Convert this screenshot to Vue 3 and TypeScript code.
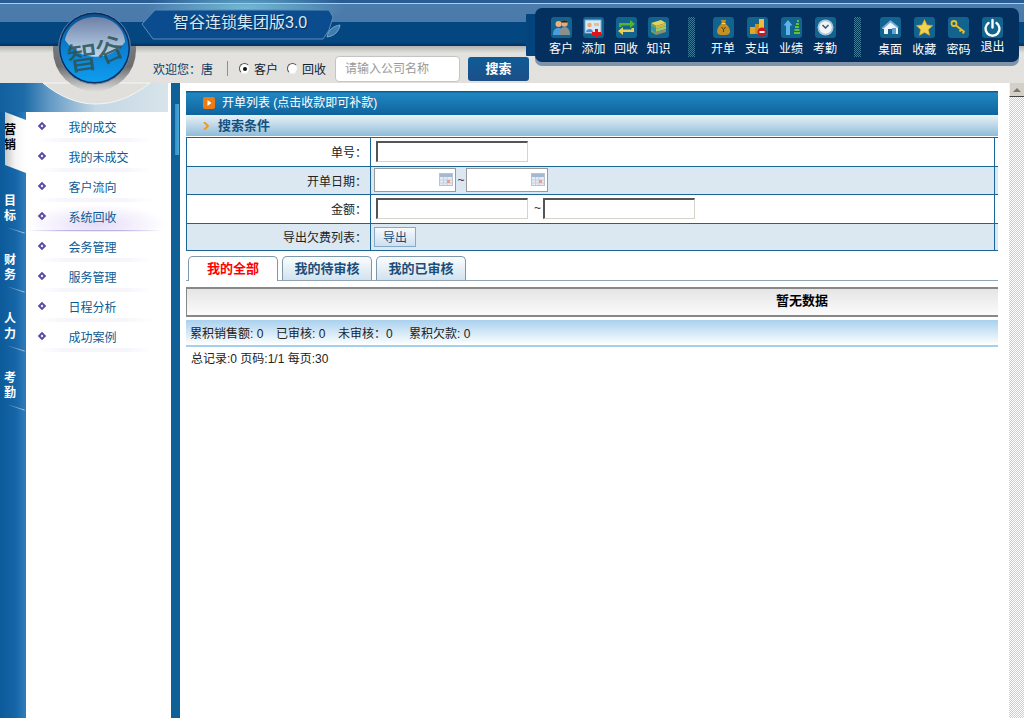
<script setup lang="ts">
import { ref } from 'vue';

interface ToolItem {
  label: string;
  icon: string;
  shift?: number;
}

// 顶部工具栏
const toolGroups: { cls: string; items: ToolItem[] }[] = [
  {
    cls: 'g1',
    items: [
      {
        label: '客户',
        icon: '<circle cx="7.5" cy="7" r="3" fill="#f0b27a"/><path d="M2 18c0-5 2-7 5.500-7S12 13 12 18z" fill="#4d9be0"/><circle cx="13.500" cy="6.500" r="3.200" fill="#e8a878"/><path d="M10.200 5.500c.5-3 6-3 6.600 0z" fill="#222"/><path d="M8 18c0-5 2-8 5.500-8s5.500 3 5.500 8z" fill="#8a8f90"/>',
      },
      {
        label: '添加',
        icon: '<rect x="2" y="3" width="16" height="13" fill="#d8e8f5" stroke="#7fb0dc"/><circle cx="6.500" cy="8" r="2.200" fill="#eda766"/><path d="M3 15c0-4 7-4 7 0z" fill="#3f8fdc"/><rect x="11" y="6" width="5" height="3" fill="#e3c08c"/><path d="M12 12h3v3h3v3h-3v3h-3v-3H9v-3h3z" fill="#e41216"/>',
      },
      {
        label: '回收',
        icon: '<path d="M3 10V6h11V3l5 4-5 4V8.500H5.500V10z" fill="#4fb52c"/><path d="M18 11v4H7v3l-5-4 5-4v2.500h8.500V11z" fill="#e9cf55"/>',
      },
      {
        label: '知识',
        icon: '<path d="M3 6l10-3 5 3-10 3z" fill="#e3d25c"/><path d="M3 6l5 3v3L3 9z" fill="#6aa84f"/><path d="M8 9l10-3v3L8 12z" fill="#c9b94a"/><path d="M3 9l5 3v3l-5-3z" fill="#3d8fc2"/><path d="M8 12l10-3v3L8 15z" fill="#9ccc65"/><path d="M3 12l5 3v3l-5-3z" fill="#5aa469"/><path d="M8 15l10-3v3L8 18z" fill="#8d8f70"/>',
      },
    ],
  },
  {
    cls: 'g2',
    items: [
      {
        label: '开单',
        icon: '<path d="M8 3h5l-1 3.500c3 1.500 5 5 5 8 0 3-3 3.500-6.500 3.500S4 17.500 4 14.500c0-3 2-6.500 5-8z" fill="#c59023"/><path d="M8.500 6.500h4" stroke="#f0d98a"/><path d="M8.500 10l2 2.500 2-2.500M10.500 12.500V15" stroke="#5c3d05" fill="none"/>',
      },
      {
        label: '支出',
        icon: '<rect x="3" y="10" width="5" height="7" fill="#e0a52e"/><rect x="8" y="7" width="4" height="10" fill="#c98e1e"/><rect x="12" y="2" width="5" height="13" fill="#edbb3d"/><circle cx="15" cy="15" r="4.500" fill="#d3121c"/><rect x="12.500" y="14" width="5" height="2" fill="#fff"/>',
      },
      {
        label: '业绩',
        icon: '<path d="M7 3l4.500 5.500H9V18H5V8.500H2.500z" fill="#5db3ee"/><path d="M13 16h6M13.500 13h5M14 10h4M15 7h3M16 4h2" stroke="#5fc13a" stroke-width="2"/>',
      },
      {
        label: '考勤',
        icon: '<circle cx="10.500" cy="10.500" r="8" fill="#a8c4d8"/><circle cx="10.500" cy="10.500" r="6.200" fill="#f0f5f8"/><path d="M7.500 8l3 3 3-3" stroke="#33566e" stroke-width="1.500" fill="none"/>',
      },
    ],
  },
  {
    cls: 'g3',
    items: [
      {
        label: '桌面',
        shift: 1,
        icon: '<path d="M2 12L10.500 4 18 10v7H12v-5H8v5H4v-5z" fill="#eef4fa"/><path d="M1.500 11L10.500 3l8.500 7-1.500 1-7-5.500L3 12z" fill="#6fa9dc"/><rect x="12" y="11" width="4" height="6" fill="#6a9fd2"/>',
      },
      {
        label: '收藏',
        shift: 1,
        icon: '<path d="M10.500 2.500l2.500 5.400 5.800.7-4.300 4 1.200 5.800-5.200-2.900-5.200 2.900 1.200-5.800-4.300-4 5.800-.7z" fill="#f3d250" stroke="#c99a1c" stroke-width=".6"/>',
      },
      {
        label: '密码',
        shift: 1,
        icon: '<circle cx="6" cy="6.500" r="2.500" fill="none" stroke="#e8bd2f" stroke-width="1.800"/><path d="M8 8.500l8.500 6.500M13 12.500l-1.300 2M16 14.500l-1.300 2" stroke="#e8bd2f" stroke-width="2" fill="none"/>',
      },
      {
        label: '退出',
        shift: -2,
        icon: '<path d="M6.500 6a7 7 0 1 0 8 0" fill="none" stroke="#fff" stroke-width="2.400" stroke-linecap="round"/><path d="M10.500 3v7.500" stroke="#fff" stroke-width="2.400" stroke-linecap="round"/>',
      },
    ],
  },
];

const railTabs = ['营销', '目标', '财务', '人力', '考勤'];
const menuItems = ['我的成交', '我的未成交', '客户流向', '系统回收', '会务管理', '服务管理', '日程分析', '成功案例'];
const activeMenu = ref('系统回收');

const tabs = ['我的全部', '我的待审核', '我的已审核'];
const activeTab = ref(0);

const stats = [
  { text: '累积销售额: 0', width: 86 },
  { text: '已审核: 0', width: 62 },
  { text: '未审核：0', width: 71 },
  { text: '累积欠款: 0', width: 70 },
];
</script>

<template>
  <div class="page">
    <header class="top">
      <div class="top-band">
        <div class="brand">
          <svg class="brand-bg" width="205" height="32" viewBox="0 0 205 32">
            <path d="M14 1H188L192 8 188 21 182 30H12L1 15z" fill="#0b4c8e" stroke="#5c8db9" />
            <path d="M186 28c1-7 6-11 13-12-1 6-5 11-13 12z" fill="#3f7db0" stroke="#8db3d4" stroke-width=".8" />
          </svg>
          <span class="brand-text">智谷连锁集团版3.0</span>
        </div>
      </div>
      <div class="top-tools">
        <span class="welcome">欢迎您：唐</span>
        <i class="divider"></i>
        <span class="radio on"></span><span class="radio-label first">客户</span>
        <span class="radio"></span><span class="radio-label">回收</span>
        <input class="company" type="text" placeholder="请输入公司名称" />
        <button class="search-btn">搜索</button>
      </div>

      <svg class="logo" width="120" height="110" viewBox="0 0 120 110">
        <defs>
          <linearGradient id="ringFill" x1="0" y1="0" x2="0" y2="1">
            <stop offset="0" stop-color="#8b8b8b" />
            <stop offset=".7" stop-color="#6e6e6e" />
            <stop offset="1" stop-color="#dcdcdc" />
          </linearGradient>
          <linearGradient id="glassFill" x1="0" y1="0" x2="0" y2="1">
            <stop offset="0" stop-color="#0c4f90" />
            <stop offset=".5" stop-color="#0b7fd0" />
            <stop offset="1" stop-color="#0f9df0" />
          </linearGradient>
          <linearGradient id="shineFill" x1="0" y1="0" x2="0" y2="1">
            <stop offset="0" stop-color="#6d80a6" />
            <stop offset="1" stop-color="#bfd9ee" />
          </linearGradient>
          <clipPath id="ringClip"><rect x="0" y="46" width="120" height="64" /></clipPath>
        </defs>
        <path d="M3 83C20 97 38 104 55 104 75 104 92 97 110 83z" fill="#e0dfdb" stroke="#f6f6f4" />
        <circle cx="54.500" cy="50" r="41.500" fill="url(#ringFill)" clip-path="url(#ringClip)" />
        <circle cx="54.500" cy="48" r="36" fill="#0a2f5c" stroke="#5f86ad" />
        <circle cx="54.500" cy="48" r="34" fill="url(#glassFill)" />
        <path d="M25 40C28 24 42 17 56 17 72 17 84 28 85 42 70 62 40 62 25 40z" fill="url(#shineFill)" />
        <text class="logo-text" x="27" y="69" font-size="31" transform="rotate(-8 42 56)">智</text>
        <text class="logo-text" x="56" y="60" font-size="28" transform="rotate(-24 70 50)">谷</text>
      </svg>

      <nav class="toolbar">
        <template v-for="(group, gi) in toolGroups" :key="group.cls">
          <i v-if="gi > 0" class="tool-sep"></i>
          <div class="tool-group" :class="group.cls">
            <div v-for="item in group.items" :key="item.label" class="tool">
              <svg class="tool-icon" width="21" height="21" viewBox="0 0 21 21" v-html="item.icon"></svg>
              <span class="tool-label" :style="{ top: (item.shift || 0) + 'px' }">{{ item.label }}</span>
            </div>
          </div>
        </template>
      </nav>
    </header>

    <div class="body">
      <aside class="side">
        <div class="side-top"></div>
        <div class="side-main">
          <ul class="rail">
            <li v-for="(tab, i) in railTabs" :key="tab" class="rail-tab" :class="{ active: i === 0 }">
              <span>{{ tab }}</span>
            </li>
          </ul>
          <ul class="menu">
            <li v-for="item in menuItems" :key="item" class="menu-item" :class="{ active: item === activeMenu }">
              <i class="bullet"></i>{{ item }}
            </li>
          </ul>
        </div>
      </aside>
      <div class="splitter"><i></i></div>

      <main class="content">
        <div class="panel-title">
          <svg class="title-icon" width="12" height="12" viewBox="0 0 12 12">
            <rect width="12" height="12" rx="2" fill="#ee7a14" />
            <path d="M4.500 3l4 3-4 3z" fill="#fff" />
          </svg>
          开单列表 (点击收款即可补款)
        </div>
        <div class="search-title">
          <svg class="chevron" width="6" height="8" viewBox="0 0 6 8">
            <path d="M1 0l4 4-4 4" fill="none" stroke="#f39a1d" stroke-width="2" />
          </svg>
          搜索条件
        </div>

        <table class="form">
          <colgroup><col class="c1" /><col class="c2" /><col /></colgroup>
          <tbody>
            <tr class="h29">
              <th>单号：</th>
              <td><input class="inset" type="text" /></td>
              <td></td>
            </tr>
            <tr class="alt h28">
              <th>开单日期：</th>
              <td>
                <div class="dates">
                  <span v-for="n in 2" :key="n" class="date-wrap">
                    <input class="date" type="text" />
                    <svg class="cal" width="14" height="13" viewBox="0 0 14 13">
                      <rect x=".5" y=".5" width="13" height="12" fill="#e4ebf3" stroke="#b8c4d2" />
                      <rect x="1" y="1" width="12" height="3" fill="#a3b9d3" />
                      <path d="M1 7h12M1 10h12M4.500 4v8M8 4v8" stroke="#c6d1de" />
                      <rect x="8" y="7" width="3" height="3" fill="#ee9f84" />
                    </svg>
                    <span v-if="n === 1" class="tilde">~</span>
                  </span>
                </div>
              </td>
              <td></td>
            </tr>
            <tr class="h29">
              <th>金额：</th>
              <td>
                <input class="inset" type="text" /><span class="tilde wide">~</span><input class="inset" type="text" />
              </td>
              <td></td>
            </tr>
            <tr class="alt h27">
              <th>导出欠费列表：</th>
              <td><button class="export">导出</button></td>
              <td></td>
            </tr>
          </tbody>
        </table>

        <div class="tabs">
          <div v-for="(tab, i) in tabs" :key="tab" class="tab" :class="{ current: i === activeTab }">{{ tab }}</div>
        </div>

        <div class="empty"><b>暂无数据</b></div>

        <div class="stats">
          <span v-for="s in stats" :key="s.text" :style="{ width: s.width + 'px' }">{{ s.text }}</span>
        </div>
        <div class="records">总记录:0 页码:1/1 每页:30</div>
      </main>

      <div class="scroll">
        <div class="scroll-up"><i></i></div>
      </div>
    </div>
  </div>
</template>

<style>
html,
body {
  margin: 0;
  overflow: hidden;
  background: #fff;
}
</style>

<style scoped>
.page {
  width: 1024px;
  height: 718px;
  display: flex;
  flex-direction: column;
  overflow: hidden;
  font-family: "Liberation Sans", "Noto Sans CJK SC", sans-serif;
  font-size: 12px;
  color: #222;
}

/* 头部 */
.top {
  position: relative;
  height: 83px;
  flex: none;
}

.top-band {
  height: 46px;
  display: flex;
  background:
    radial-gradient(ellipse 100px 20px at 245px 8px, rgba(125, 205, 225, 0.75), transparent),
    linear-gradient(180deg, #2a5c94 0, #2a5c94 3px, #b4cbe2 3px, #b4cbe2 4px, #4c7cab 4px, #4a7aa9 22px, #04467f 22px, #04467f 42px, #023568 45px, #023568 46px);
}

.brand {
  position: relative;
  margin: 9px 0 0 141px;
  width: 205px;
  height: 31px;
}

.brand-bg {
  position: absolute;
  left: 0;
  top: 0;
}

.brand-text {
  position: relative;
  display: block;
  padding: 4px 0 0 32px;
  font-size: 16px;
  line-height: 20px;
  color: #dbe8f2;
  text-shadow: 1px 1px 1px #052a55;
}

.top-tools {
  height: 37px;
  display: flex;
  align-items: center;
  padding: 8px 0 0 153px;
  box-sizing: border-box;
  background: linear-gradient(180deg, #b1b1af 0, #e2e2de 7px, #e2e1dd 100%);
}

.welcome {
  width: 74px;
  color: #0f3a64;
}

.divider {
  width: 1px;
  height: 15px;
  background: #7f93a6;
  margin-right: 11px;
}

.radio {
  position: relative;
  width: 9px;
  height: 9px;
  border-radius: 50%;
  background: #fff;
  border: 1px solid #666;
  border-color: #555 #ddd #eee #555;
}

.radio.on::after {
  content: "";
  position: absolute;
  left: 2.500px;
  top: 2.500px;
  width: 4px;
  height: 4px;
  border-radius: 50%;
  background: #111;
}

.radio-label {
  margin-left: 4px;
  width: 34px;
  color: #123;
}

.radio-label.first {
  width: 33px;
}

.company {
  box-sizing: border-box;
  width: 125px;
  height: 26px;
  margin-left: -1px;
  border: 1px solid #c4c4c4;
  border-radius: 4px;
  padding: 0 9px;
  background: #fff;
  font: 12px "Liberation Sans", "Noto Sans CJK SC", sans-serif;
}

.company::placeholder {
  color: #999;
}

.search-btn {
  width: 61px;
  height: 24px;
  margin-left: 8px;
  border: none;
  border-radius: 3px;
  padding: 0 0 2px;
  background: linear-gradient(180deg, #0f5c97, #1c4f88);
  color: #fff;
  font: bold 13px "Liberation Sans", "Noto Sans CJK SC", sans-serif;
}

.logo {
  position: absolute;
  left: 40px;
  top: 0;
  z-index: 3;
}

.logo-text {
  font-family: "Noto Sans CJK SC", sans-serif;
  font-weight: 500;
  fill: #2c5254;
  fill-opacity: 0.85;
}

.toolbar {
  position: absolute;
  left: 535px;
  top: 8px;
  width: 484px;
  height: 54px;
  padding: 9px 0 0 14px;
  box-sizing: border-box;
  display: flex;
  background: #03305f;
  border-radius: 7px;
  box-shadow: 0 4px 0 #7f93ab, -15px 0 0 -6px #03447c;
}

.tool-group {
  display: flex;
}

.g1 {
  gap: 8.500px;
  width: 139px;
}

.g2 {
  gap: 10px;
  width: 143px;
  margin-left: 16px;
}

.g3 {
  gap: 10.200px;
  margin-left: 17px;
}

.tool {
  width: 24px;
  display: flex;
  flex-direction: column;
  align-items: center;
}

.tool-icon {
  width: 21px;
  height: 21px;
  background: #12638e;
  border-radius: 3px;
}

.tool-label {
  position: relative;
  margin-top: 2px;
  color: #fff;
  line-height: 18px;
  white-space: nowrap;
}

.tool-sep {
  width: 7px;
  height: 40px;
  flex: none;
  background: repeating-conic-gradient(#3f7b98 0 25%, transparent 0 50%) 0 0 / 2px 2px;
}

/* 主体 */
.body {
  flex: 1;
  display: flex;
  min-height: 0;
}

.side {
  width: 168px;
  flex: none;
  display: flex;
  flex-direction: column;
}

.side-top {
  height: 29px;
  flex: none;
  background: linear-gradient(90deg, #12609f 0, #1d6ba8 24px, #5f97c4 48px, #c3d7e5 95px, #d8e4ea 100%);
}

.side-main {
  flex: 1;
  display: flex;
}

.rail {
  width: 26px;
  margin: 0;
  padding: 0;
  list-style: none;
  background: linear-gradient(90deg, #0c5a99, #1666a8 16px, #2f7dbc);
}

.rail-tab {
  position: relative;
  height: 59px;
  padding: 12px 0 0 4px;
  box-sizing: border-box;
  display: flex;
  align-items: center;
  color: #fff;
  font-weight: bold;
  line-height: 15px;
}

.rail-tab span {
  width: 12px;
}

.rail-tab::after {
  content: "";
  position: absolute;
  left: 8px;
  bottom: 1px;
  width: 17px;
  height: 1px;
  background: linear-gradient(90deg, #1f6dab, #c9d4de);
  transform: rotate(18deg);
}

.rail-tab.active {
  height: 61px;
  padding: 0 0 9px 4px;
  color: #000;
  margin-left: 0;
  background: linear-gradient(90deg, transparent 5px, #c6c6c6 5px, #f4f4f4 15px, #fff 26px);
  clip-path: polygon(5px 0, 100% 8px, 100% 100%, 5px 53px);
}

.rail-tab.active::after {
  display: none;
}

.menu {
  width: 142px;
  margin: 0;
  padding: 0;
  list-style: none;
  background: #fff;
}

.menu-item {
  position: relative;
  height: 30px;
  box-sizing: border-box;
  display: flex;
  align-items: center;
  padding: 0 0 2px 12px;
  color: #0c5a94;
}

.menu-item::after {
  content: "";
  position: absolute;
  left: 10px;
  right: 15px;
  bottom: 0;
  height: 4px;
  background: linear-gradient(90deg, transparent, #f6f5fb 25%, #f6f5fb 75%, transparent);
}

.menu-item.active {
  background: radial-gradient(ellipse 70px 20px at 70px 22px, #e5dcf8, transparent);
}

.menu-item.active::after {
  left: 0;
  right: 6px;
  bottom: 1px;
  height: 1px;
  background: linear-gradient(90deg, transparent, #bfb2e6 30%, #bfb2e6 70%, transparent);
}

.bullet {
  width: 2px;
  height: 2px;
  margin: 0 23.500px 0 1px;
  border: 2px solid #5d49a5;
  background: #fff;
  transform: rotate(45deg);
  flex: none;
}

.splitter {
  flex: none;
  width: 9px;
  margin-left: 3px;
  background: #0e6096;
  position: relative;
}

.splitter i {
  position: absolute;
  left: 4px;
  top: 21px;
  width: 4px;
  height: 51px;
  background: linear-gradient(90deg, #2f92c9, #4aa8d8);
}

.content {
  flex: 1;
  min-width: 0;
  padding: 8px 11px 0 6px;
}

.panel-title {
  height: 24px;
  box-sizing: border-box;
  display: flex;
  align-items: center;
  padding: 0 0 4px 17px;
  color: #fff;
  background: linear-gradient(180deg, #0b5d96 0, #0b5d96 1px, #2187c1 2px, #0f639d 100%);
}

.title-icon {
  margin: 4px 7px 0 0;
}

.search-title {
  height: 21px;
  box-sizing: border-box;
  margin-bottom: 1px;
  display: flex;
  align-items: center;
  padding: 0 0 2px 17px;
  font-size: 13px;
  font-weight: bold;
  color: #14507f;
  background: linear-gradient(180deg, #eaf2f6, #8fbcd9);
}

.chevron {
  margin: 2px 9px 0 0;
}

.form {
  width: 812px;
  border-collapse: collapse;
  table-layout: fixed;
  border-left: 1px solid #1a6496;
}

.c1 {
  width: 184px;
}

.c2 {
  width: 624px;
}

.form tr {
  border-top: 1px solid #1a6496;
  border-bottom: 1px solid #1a6496;
}

.form th {
  padding: 0 3px 1px 0;
  text-align: right;
  font-weight: normal;
  color: #222;
}

.form td {
  padding: 0 0 1px 5px;
  border-left: 1px solid #1a6496;
}

.form td:last-child {
  padding: 0;
}

.alt {
  background: #dbe8f2;
}

.h29 {
  height: 29px;
}

.h28 {
  height: 28px;
}

.h27 {
  height: 27px;
}

.inset {
  box-sizing: border-box;
  width: 152px;
  height: 21px;
  vertical-align: middle;
  border: solid;
  border-width: 2px 1px 1px 2px;
  border-color: #555 #d6d3cb #d6d3cb #555;
  background: #fff;
}

.dates {
  display: flex;
  margin-left: -2px;
}

.date-wrap {
  position: relative;
  display: flex;
  align-items: center;
}

.date {
  box-sizing: border-box;
  width: 82px;
  height: 24px;
  border: 1px solid #999;
  background: #fff;
}

.cal {
  position: absolute;
  left: 65px;
  top: 5px;
}

.tilde {
  width: 10px;
  text-align: center;
  color: #333;
}

.tilde.wide {
  display: inline-block;
  width: 13px;
  padding-right: 2px;
  text-align: right;
}

.export {
  display: block;
  width: 42px;
  height: 20px;
  margin-left: -2px;
  padding: 0;
  border: 1px solid #86a9c9;
  background: linear-gradient(180deg, #f6fafd, #cde0f1);
  color: #1a4e7a;
  font: 12px "Liberation Sans", "Noto Sans CJK SC", sans-serif;
}

.tabs {
  display: flex;
  gap: 4px;
  height: 25px;
  margin-top: 5px;
  padding-left: 2px;
  box-sizing: border-box;
  border-bottom: 1px solid #8fa5b5;
}

.tab {
  width: 90px;
  height: 24px;
  box-sizing: border-box;
  border: 1px solid #7d98ad;
  border-bottom: none;
  border-radius: 5px 5px 0 0;
  background: linear-gradient(180deg, #fbfdfe, #d2e2ee);
  text-align: center;
  line-height: 23px;
  font-size: 13px;
  font-weight: bold;
  color: #1a4e7a;
}

.tab.current {
  height: 25px;
  background: #fff;
  color: #f00;
}

.empty {
  height: 30px;
  margin-top: 6px;
  box-sizing: border-box;
  border: solid #888;
  border-width: 2px 0 2px 1px;
  padding: 0 0 5px 589px;
  display: flex;
  align-items: center;
  font-size: 13px;
  color: #000;
  background: linear-gradient(180deg, #e5e5e5, #fbfbfb);
}

.stats {
  height: 27px;
  margin-top: 3px;
  box-sizing: border-box;
  padding: 0 0 2px 4px;
  display: flex;
  align-items: center;
  color: #222;
  white-space: nowrap;
  background: linear-gradient(180deg, #a9d0ee, #eaf4fb 70%, #fff 92%, #a6d0ea 92%);
}

.records {
  padding: 4px 0 0 5px;
  line-height: 16px;
}

.scroll {
  width: 15px;
  flex: none;
  background: repeating-conic-gradient(#cfcfc8 0 25%, #fff 0 50%) 0 0 / 2px 2px;
}

.scroll-up {
  height: 14px;
  box-sizing: border-box;
  border-bottom: 1px solid #444;
  border-left: 1px solid #f4f4f0;
  background: #d4d0c8;
  display: flex;
  align-items: center;
  justify-content: center;
}

.scroll-up i {
  width: 0;
  height: 0;
  border: 4px solid transparent;
  border-top: 0;
  border-bottom: 4px solid #777;
}
</style>
